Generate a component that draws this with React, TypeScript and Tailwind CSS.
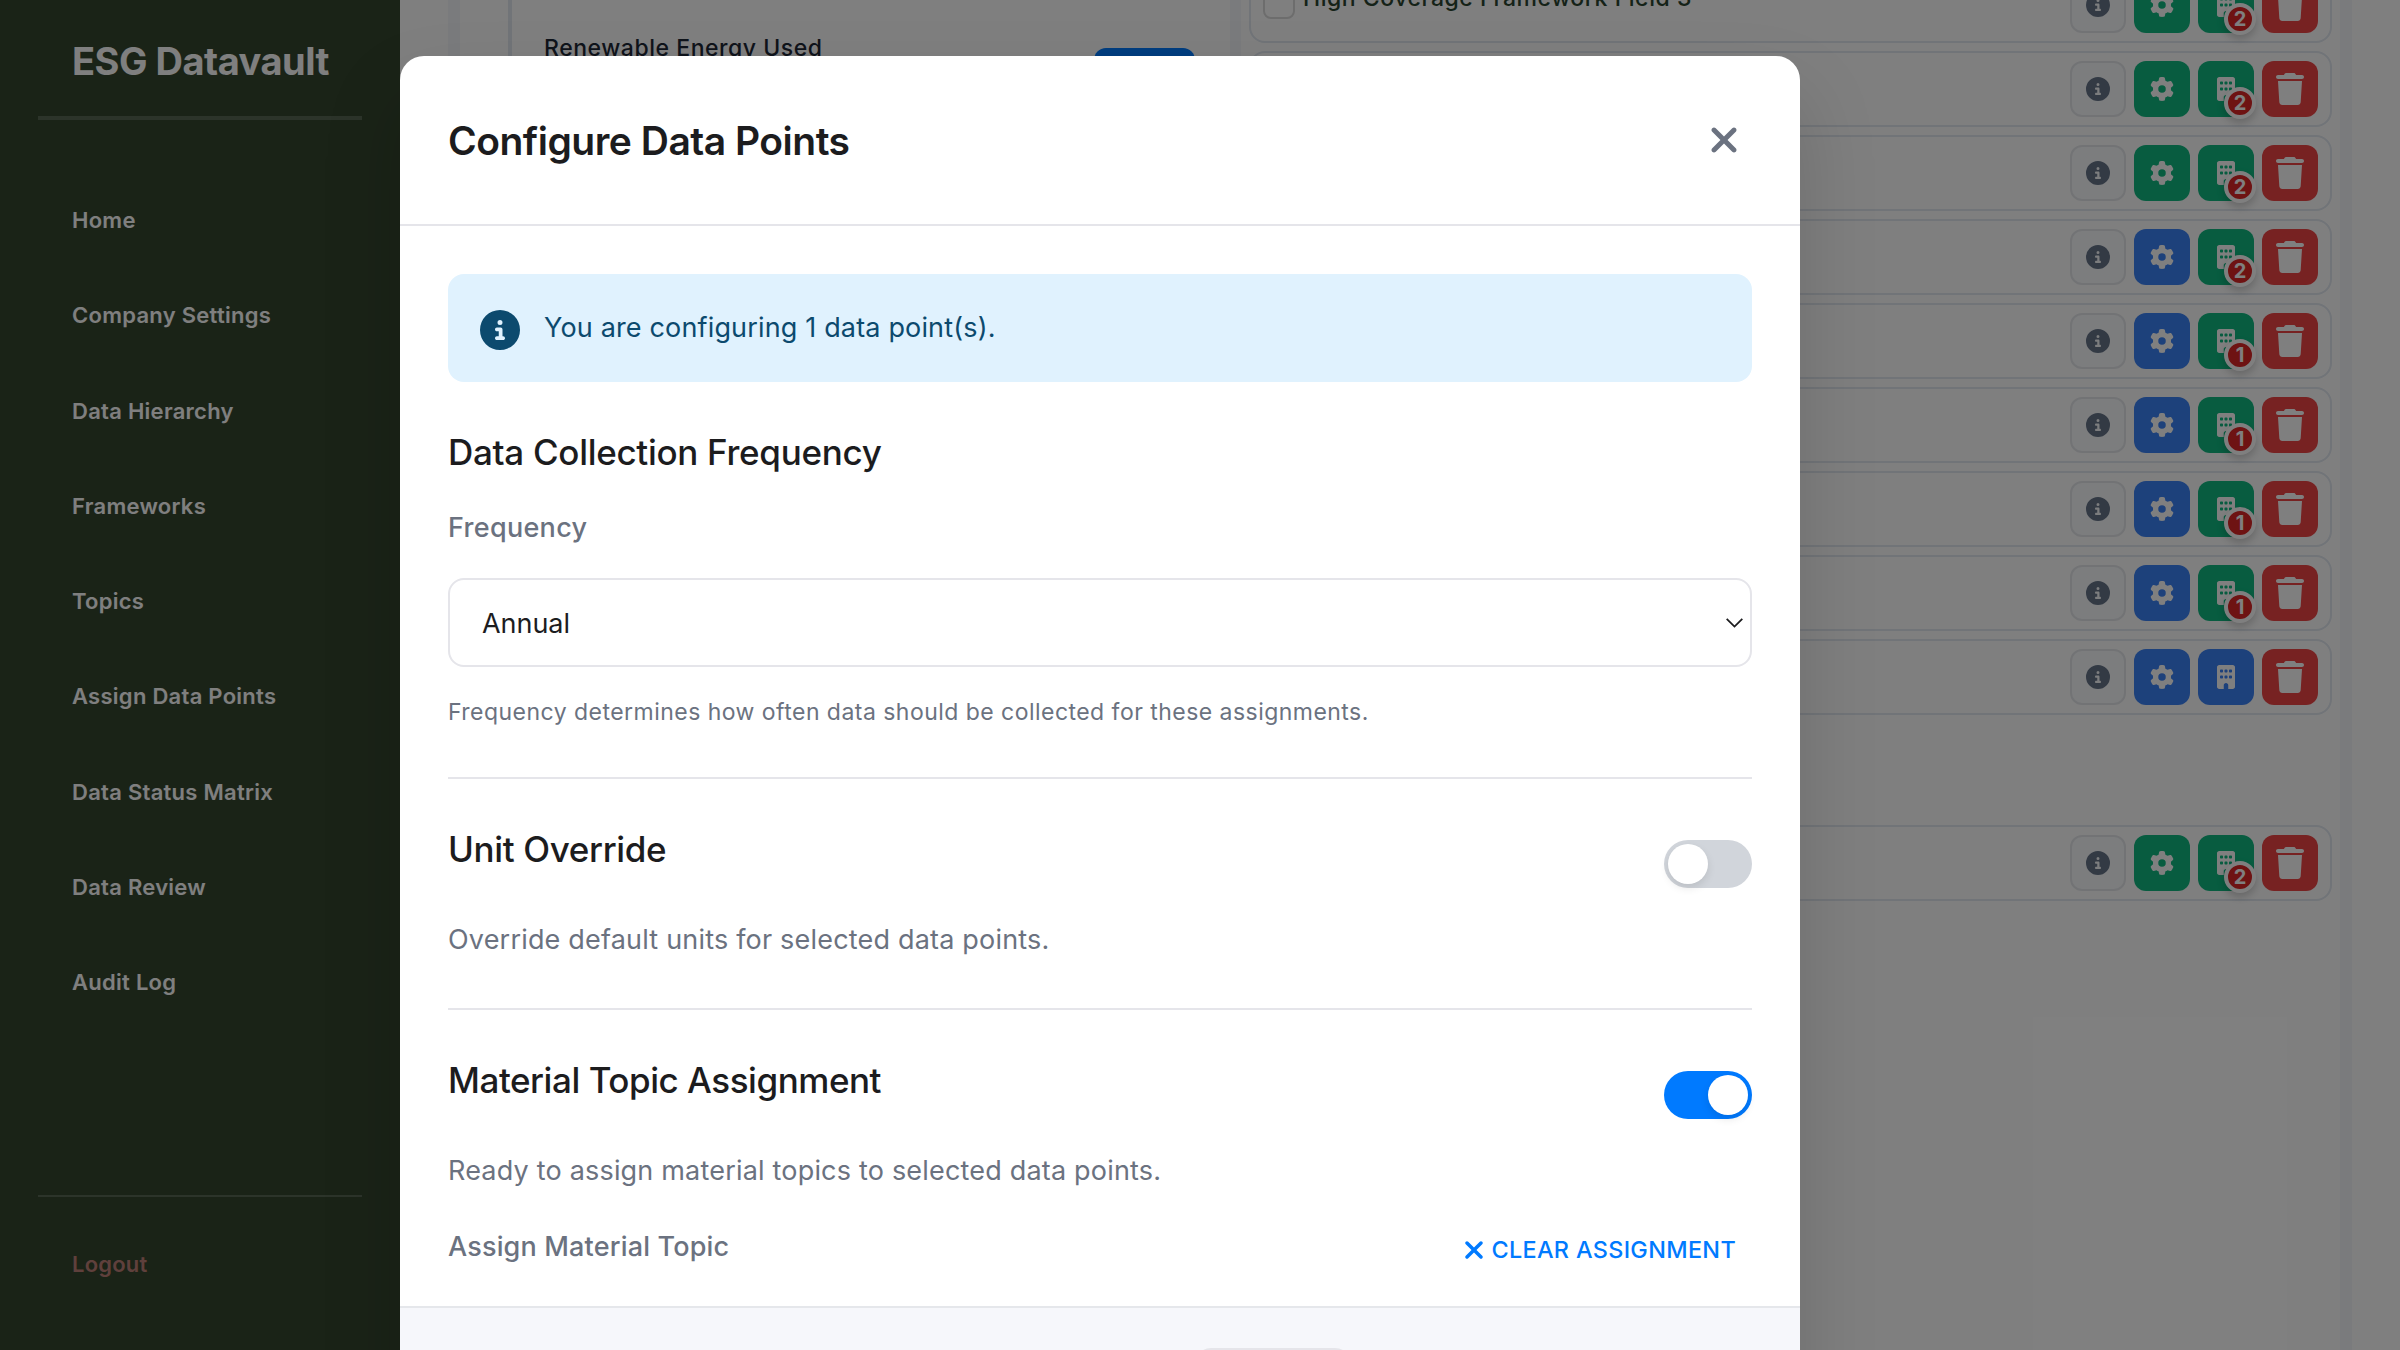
import { FaBuilding, FaCircleInfo, FaGear, FaTrash, FaXmark } from "react-icons/fa6";

const NAV = [
  "Home",
  "Company Settings",
  "Data Hierarchy",
  "Frameworks",
  "Topics",
  "Assign Data Points",
  "Data Status Matrix",
  "Data Review",
  "Audit Log",
];

type Row = { label?: string; gear: "green" | "blue"; count?: number };

const ROWS: Row[] = [
  { label: "High Coverage Framework Field 3", gear: "green", count: 2 },
  { gear: "green", count: 2 },
  { gear: "green", count: 2 },
  { gear: "blue", count: 2 },
  { gear: "blue", count: 1 },
  { gear: "blue", count: 1 },
  { gear: "blue", count: 1 },
  { gear: "blue", count: 1 },
  { gear: "blue" },
];

function Sidebar() {
  return (
    <aside className="flex h-full w-[400px] shrink-0 flex-col bg-[#34462f] px-[38px] font-semibold text-white">
      <div className="flex h-[120px] shrink-0 items-center border-b-4 border-[#586854] pt-[6px] pl-[34px]">
        <span className="text-[38px] leading-none font-bold tracking-[-0.49px] whitespace-nowrap">ESG Datavault</span>
      </div>
      <nav className="mt-[52.4px] flex flex-col">
        {NAV.map((item) => (
          <a key={item} className="flex h-[95.25px] items-center pl-[34px] text-[22px] leading-none tracking-[0.27px] whitespace-nowrap">
            {item}
          </a>
        ))}
      </nav>
      <div className="mt-auto h-[155px] border-t-2 border-[#586854]">
        <a className="flex h-[134px] items-center pl-[34px] text-[22px] leading-none tracking-[0.2px] text-[#ff9c9c]/70">Logout</a>
      </div>
    </aside>
  );
}

function DataRow({ label, gear, count }: Row) {
  return (
    <div className="flex h-[76px] shrink-0 items-center justify-between rounded-[16px] border-2 border-[#e2e8f0] px-3">
      <div className="flex items-center gap-[8px]">
        <span className="-mt-[4px] h-8 w-8 rounded-[8px] border-2 border-[#dadada]" />
        <span className="-mt-[14px] text-[23px] leading-[30px] font-medium tracking-[0.54px] whitespace-nowrap text-[#2b4530]">
          {label}
        </span>
      </div>
      <div className="flex gap-2 text-white">
        <span className="flex h-14 w-14 items-center justify-center rounded-[12px] border-2 border-[#e5e7eb] bg-[#f8fafc]">
          <FaCircleInfo size={24} className="text-[#667489]" />
        </span>
        <span
          className={`flex h-14 w-14 items-center justify-center rounded-[12px] ${gear === "green" ? "bg-[#10b981]" : "bg-[#3b82f6]"}`}
        >
          <FaGear size={24} />
        </span>
        <span
          className={`relative flex h-14 w-14 items-center justify-center rounded-[12px] ${count ? "bg-[#10b981]" : "bg-[#3b82f6]"}`}
        >
          <FaBuilding size={24} />
          {count && (
            <span className="absolute -right-[2px] -bottom-[2px] flex h-8 w-8 items-center justify-center rounded-full border-4 border-white bg-[#dc2626] text-[20px] leading-none font-bold shadow-[0_4px_8px_rgba(0,0,0,0.2)]">
              {count}
            </span>
          )}
        </span>
        <span className="flex h-14 w-14 items-center justify-center rounded-[12px] bg-[#ef4444]">
          <FaTrash size={32} />
        </span>
      </div>
    </div>
  );
}

function Workspace() {
  return (
    <main className="flex-1 overflow-hidden bg-white px-12">
      <div className="flex h-full gap-[11px] bg-[#f5f7fa] px-3">
        <section className="h-full w-[770px] bg-white pl-12">
          <div className="flex h-full justify-between border-l-4 border-[#e2e8f0] pr-[35px] pl-[32px]">
            <span className="mt-[33px] text-[23px] leading-[30px] font-medium tracking-[0.54px] text-[#1f2937]">
              Renewable Energy Used
            </span>
            <span className="mt-12 h-14 w-[101px] rounded-[12px] bg-[#007aff]" />
          </div>
        </section>
        <section className="h-full flex-1 bg-white px-2">
          <div className="-mt-[33px] flex flex-col gap-2">
            {ROWS.map((row, i) => (
              <DataRow key={i} {...row} />
            ))}
          </div>
          <div className="mt-[110px]">
            <DataRow gear="green" count={2} />
          </div>
        </section>
      </div>
    </main>
  );
}

function Toggle({ on }: { on?: boolean }) {
  return (
    <span className={`mt-[13px] flex h-12 w-[88px] rounded-full p-1 ${on ? "justify-end bg-[#007aff]" : "bg-[#d1d5db]"}`}>
      <span className="h-10 w-10 rounded-full bg-white shadow-[0_4px_8px_rgba(0,0,0,0.1)]" />
    </span>
  );
}

function ToggleSection({ title, text, on }: { title: string; text: string; on?: boolean }) {
  return (
    <div className="pt-12">
      <div className="flex h-[96px] items-start justify-between">
        <h3
          className={`text-[35px] leading-[44px] font-medium text-[#1c1c1e] ${on ? "tracking-[-0.46px]" : "tracking-[-0.35px]"}`}
        >
          {title}
        </h3>
        <Toggle on={on} />
      </div>
      <p className="text-[27px] leading-[34px] tracking-[0.19px] text-[#6b7280]">{text}</p>
    </div>
  );
}

function ConfigureModal() {
  return (
    <div className="h-[1400px] w-[1400px] overflow-hidden rounded-[24px] bg-white">
      <header className="flex h-[170px] items-center justify-between border-b-2 border-[#e5e5ea] pr-[56px] pl-12">
        <h2 className="text-[39px] leading-none font-semibold tracking-[-0.5px] text-[#1c1c1e]">
          Configure Data Points
        </h2>
        <FaXmark size={40} className="text-[#6b7280]" />
      </header>
      <div className="h-[1080px] px-12 pt-12">
        <div className="flex h-[108px] items-center gap-6 rounded-[16px] bg-[#e0f2fe] pl-8 text-[#0c4a6e]">
          <FaCircleInfo size={40} className="mt-1" />
          <span className="text-[27px] leading-[34px] tracking-[0.16px]">You are configuring 1 data point(s).</span>
        </div>
        <h3 className="mt-12 text-[35px] leading-[44px] font-medium tracking-[-0.3px] text-[#1c1c1e]">
          Data Collection Frequency
        </h3>
        <label className="mt-[37px] block text-[27px] leading-[34px] font-medium tracking-[0.3px] text-[#6b7280]">Frequency</label>
        <div className="mt-[33px] flex h-[89px] items-center justify-between rounded-[16px] border-2 border-[#e5e5ea] pr-[7px] pl-8">
          <span className="pt-[2px] text-[27px] leading-[34px] tracking-[-0.05px] text-[#1c1c1e]">Annual</span>
          <svg width="17" height="10" viewBox="0 0 17 10" fill="none" stroke="#1c1c1e" strokeWidth="1.8">
            <path d="M0.7 0.9 8.5 8.6 16.3 0.9" />
          </svg>
        </div>
        <p className="mt-[28px] h-[82px] text-[23px] leading-[34px] tracking-[0.465px] text-[#6b7280]">
          Frequency determines how often data should be collected for these assignments.
        </p>
        <div className="h-[233px] border-y-2 border-[#e5e5ea]">
          <ToggleSection title="Unit Override" text="Override default units for selected data points." />
        </div>
        <ToggleSection
          title="Material Topic Assignment"
          text="Ready to assign material topics to selected data points."
          on
        />
        <div className="mt-[42px] flex items-start justify-between pr-4">
          <span className="text-[27px] leading-[34px] font-medium tracking-[0.17px] text-[#6b7280]">Assign Material Topic</span>
          <button className="flex items-center gap-[3px] pt-[3px] text-[23.4px] leading-[34px] font-medium tracking-[0.34px] text-[#007aff]">
            <FaXmark size={28} />
            CLEAR ASSIGNMENT
          </button>
        </div>
      </div>
      <footer className="flex h-[150px] items-start border-t-2 border-[#e5e7eb] bg-[#f6f7fb] pt-10 pl-[795px]">
        <span className="h-20 w-[156px] rounded-[16px] bg-[#e5e5ea]" />
      </footer>
    </div>
  );
}

export default function App() {
  return (
    <div className="relative h-[1350px] w-[2400px] overflow-hidden font-['Inter',sans-serif]">
      <div className="flex h-full">
        <Sidebar />
        <Workspace />
      </div>
      <div className="absolute inset-0 overflow-hidden bg-black/50 pt-14 pl-[400px]">
        <div className="w-[1400px] rounded-[24px] shadow-[0_40px_80px_rgba(0,0,0,0.15)]">
          <ConfigureModal />
        </div>
      </div>
    </div>
  );
}
